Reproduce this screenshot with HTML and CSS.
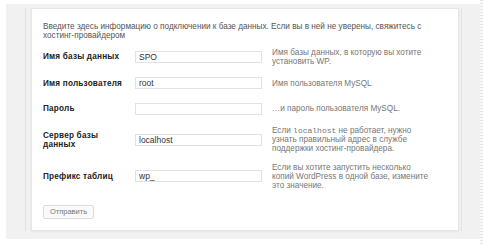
FILE: index.html
```html
<!DOCTYPE html>
<html lang="ru">
<head>
  <meta charset="UTF-8" />
  <meta name="viewport" content="width=device-width, initial-scale=1.0"/>
  <title>Установка WordPress</title>
  <link rel="stylesheet" href="styles.css">
</head>
<body>
  <div class="page">
    <div class="sheet">
      <form class="panel">
        <p class="intro">Введите здесь информацию о подключении к базе данных. Если вы в ней не уверены, свяжитесь с хостинг-провайдером</p>

        <div class="row">
          <label class="name" for="dbname">Имя базы данных</label>
          <input class="field" id="dbname" type="text" value="SPO">
          <p class="help">Имя базы данных, в которую вы хотите установить WP.</p>
        </div>

        <div class="row">
          <label class="name" for="uname">Имя пользователя</label>
          <input class="field" id="uname" type="text" value="root">
          <p class="help">Имя пользователя MySQL</p>
        </div>

        <div class="row">
          <label class="name" for="pwd">Пароль</label>
          <input class="field" id="pwd" type="text" value="">
          <p class="help">…и пароль пользователя MySQL.</p>
        </div>

        <div class="row">
          <label class="name" for="dbhost">Сервер базы данных</label>
          <input class="field" id="dbhost" type="text" value="localhost">
          <p class="help">Если <code>localhost</code> не работает, нужно узнать правильный адрес в службе поддержки хостинг-провайдера.</p>
        </div>

        <div class="row">
          <label class="name" for="prefix">Префикс таблиц</label>
          <input class="field" id="prefix" type="text" value="wp_">
          <p class="help">Если вы хотите запустить несколько копий WordPress в одной базе, измените это значение.</p>
        </div>

        <button class="btn-send" type="button">Отправить</button>
      </form>
    </div>
  </div>
  <div class="rail"></div>
</body>
</html>
```

FILE: styles.css
```css
html, body {
  margin: 0;
  height: 100%;
}

body {
  display: flex;
  align-items: flex-start;
  background: white;
  font-family: "Liberation Sans", Arial, sans-serif;
  font-size: 8.2px;
  color: #444;
  overflow: hidden;
}

.page {
  width: 474px;
  box-sizing: border-box;
  margin: 4px 0 0 6px;
  padding: 4px 18px 8px 19px;
  background: #f1f1f1;
}

.sheet {
  border-left: 1px solid #e2e2e2;
  border-right: 1px solid #e2e2e2;
  padding: 0 2px 0 5px;
}

.panel {
  background: white;
  border: 1px solid #e6e6e6;
  box-shadow: 0 1px 2px rgba(0, 0, 0, 0.05);
  padding: 13px 12px 11px 11px;
  height: 223px;
  box-sizing: border-box;
}

.intro {
  max-width: 390px;
  margin: 0 0 3px 0;
  line-height: 9px;
  color: #555;
}

.row {
  display: flex;
  align-items: center;
  min-height: 16px;
  padding: 4.75px 0;
}

.name {
  width: 80px;
  margin-right: 12px;
  flex-shrink: 0;
  font-weight: bold;
  color: #222;
  line-height: 9px;
  letter-spacing: 0.2px;
}

.field {
  width: 127px;
  height: 12px;
  box-sizing: border-box;
  margin: 0 10px 0 0;
  padding: 0 3px;
  border: 1px solid #e2e2e2;
  background: white;
  font-family: "Liberation Sans", Arial, sans-serif;
  font-size: 8.5px;
  color: #333;
  outline: none;
}

.help {
  margin: 0;
  width: 160px;
  line-height: 9px;
  color: #777;
}

.help code {
  font-family: "Liberation Mono", "Courier New", monospace;
  font-size: 8px;
  line-height: 8px;
}

.btn-send {
  margin-top: 10px;
  width: 51px;
  height: 14px;
  padding: 0;
  border: 1px solid #dcdcdc;
  border-radius: 2px;
  background: #fafafa;
  font-family: "Liberation Sans", Arial, sans-serif;
  font-size: 7.5px;
  color: #777;
}

.rail {
  width: 3px;
  height: 244px;
  background: repeating-linear-gradient(to bottom, #e4e4e4 0 1px, #fafafa 1px 3px);
}
```
